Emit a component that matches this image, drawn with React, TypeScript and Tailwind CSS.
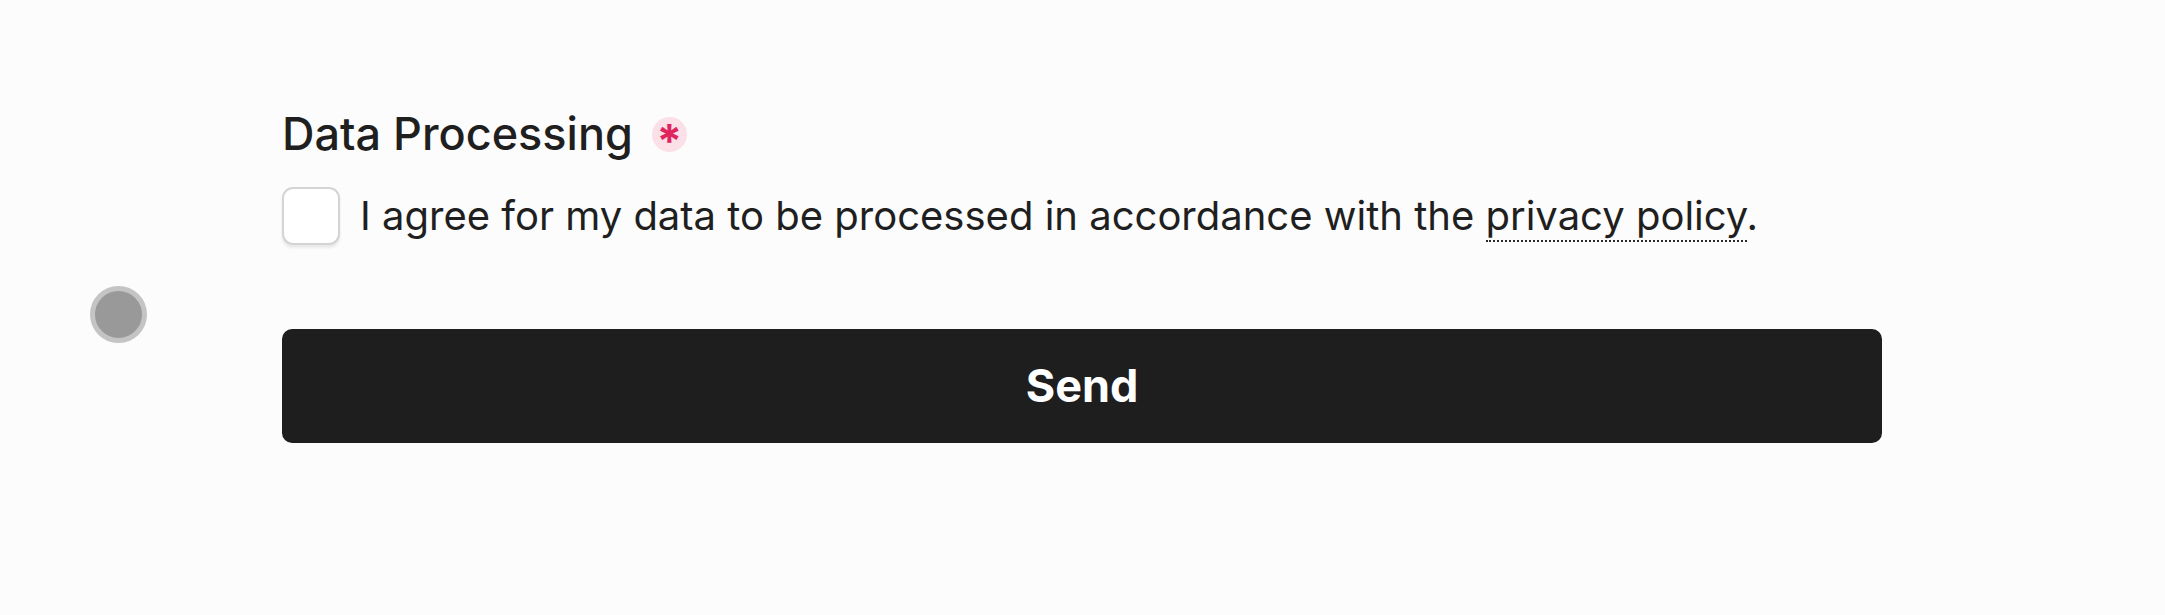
export default function App() {
  return (
    <div
      className="relative min-h-screen w-full bg-[#fcfcfc] text-[#1f1f1f]"
      style={{ fontFamily: 'Inter, "Noto Sans", sans-serif' }}
    >
      <div className="absolute left-[90px] top-[286px] h-[57px] w-[57px] rounded-full border-[5px] border-[#c4c4c4] bg-[#999999]" />

      <form className="pl-[282px] pt-[107px]" onSubmit={(e) => e.preventDefault()}>
        <div className="flex items-center gap-[19px]">
          <span className="text-[45px] font-medium leading-[54px]">Data Processing</span>
          <span className="flex h-[35px] w-[35px] items-center justify-center rounded-full bg-[#fbe0e8] pt-[14px] text-[46px] font-bold leading-none text-[#e0245e]">
            *
          </span>
        </div>

        <label className="mt-[25px] flex items-center gap-[20px]">
          <input
            type="checkbox"
            className="h-[58px] w-[58px] shrink-0 appearance-none rounded-[11px] border-2 border-[#d4d4d4] bg-white shadow-[0_3px_3px_rgba(0,0,0,0.08)]"
          />
          <span className="text-[40px] leading-normal">
            I agree for my data to be processed in accordance with the{' '}
            <span className="border-b-2 border-dotted border-[#2a2a2a]">privacy policy</span>.
          </span>
        </label>

        <button
          type="submit"
          className="mt-[83px] flex h-[114px] w-[1600px] items-center justify-center rounded-[10px] bg-[#1e1e1e] text-[45px] font-bold text-white"
        >
          Send
        </button>
      </form>
    </div>
  )
}
